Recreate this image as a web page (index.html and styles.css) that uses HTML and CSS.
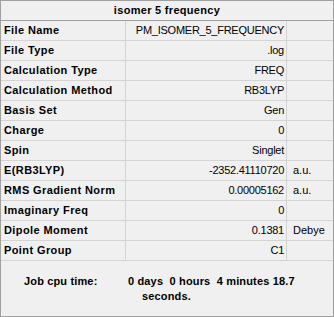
FILE: index.html
```html
<!DOCTYPE html>
<html>
<head>
<meta charset="utf-8">
<link rel="stylesheet" href="styles.css">
</head>
<body>
<div class="panel">
  <div class="title">isomer 5 frequency</div>
  <div class="grid">
    <div class="lbl">File Name</div><div class="val">PM_ISOMER_5_FREQUENCY</div><div class="unit"></div>
    <div class="lbl">File Type</div><div class="val">.log</div><div class="unit"></div>
    <div class="lbl">Calculation Type</div><div class="val">FREQ</div><div class="unit"></div>
    <div class="lbl">Calculation Method</div><div class="val">RB3LYP</div><div class="unit"></div>
    <div class="lbl">Basis Set</div><div class="val">Gen</div><div class="unit"></div>
    <div class="lbl">Charge</div><div class="val">0</div><div class="unit"></div>
    <div class="lbl">Spin</div><div class="val">Singlet</div><div class="unit"></div>
    <div class="lbl">E(RB3LYP)</div><div class="val">-2352.41110720</div><div class="unit">a.u.</div>
    <div class="lbl">RMS Gradient Norm</div><div class="val">0.00005162</div><div class="unit">a.u.</div>
    <div class="lbl">Imaginary Freq</div><div class="val">0</div><div class="unit"></div>
    <div class="lbl">Dipole Moment</div><div class="val">0.1381</div><div class="unit">Debye</div>
    <div class="lbl">Point Group</div><div class="val">C1</div><div class="unit"></div>
  </div>
  <div class="footer">
    <div class="line1"><span class="jlbl">Job cpu time:</span><span>0 days&nbsp; 0 hours&nbsp; 4 minutes 18.7</span></div>
    <div class="line2">seconds.</div>
  </div>
</div>
</body>
</html>
```
FILE: styles.css
```css
html, body {
  margin: 0;
  padding: 0;
  background: #f0f0f0;
}
.panel {
  width: 334px;
  height: 317px;
  box-sizing: border-box;
  border: 1px solid #a0a0a0;
  background: #f0f0f0;
  font-family: "Liberation Sans", Arial, sans-serif;
  font-size: 11px;
  color: #000;
  display: flex;
  flex-direction: column;
}
.title {
  height: 19px;
  line-height: 19px;
  border-bottom: 1px solid #a0a0a0;
  text-align: center;
  font-weight: bold;
  letter-spacing: 0.3px;
}
.grid {
  display: grid;
  grid-template-columns: 125px 161px 46px;
  grid-auto-rows: 20px;
}
.grid > div {
  box-sizing: border-box;
  border-bottom: 1px solid #d4d4d4;
  line-height: 19px;
  white-space: nowrap;
  overflow: hidden;
}
.lbl {
  border-right: 1px solid #d4d4d4;
  font-weight: bold;
  padding-left: 3px;
  letter-spacing: 0.4px;
}
.val {
  border-right: 1px solid #d4d4d4;
  text-align: right;
  padding-right: 2px;
  letter-spacing: -0.25px;
}
.unit {
  padding-left: 6px;
}
.footer {
  flex: 1;
  padding-top: 13px;
  font-weight: bold;
  line-height: 15px;
  letter-spacing: 0.15px;
}
.line1 {
  display: flex;
}
.jlbl {
  width: 104px;
  padding-left: 23px;
}
.line2 {
  padding-left: 141px;
}
```
